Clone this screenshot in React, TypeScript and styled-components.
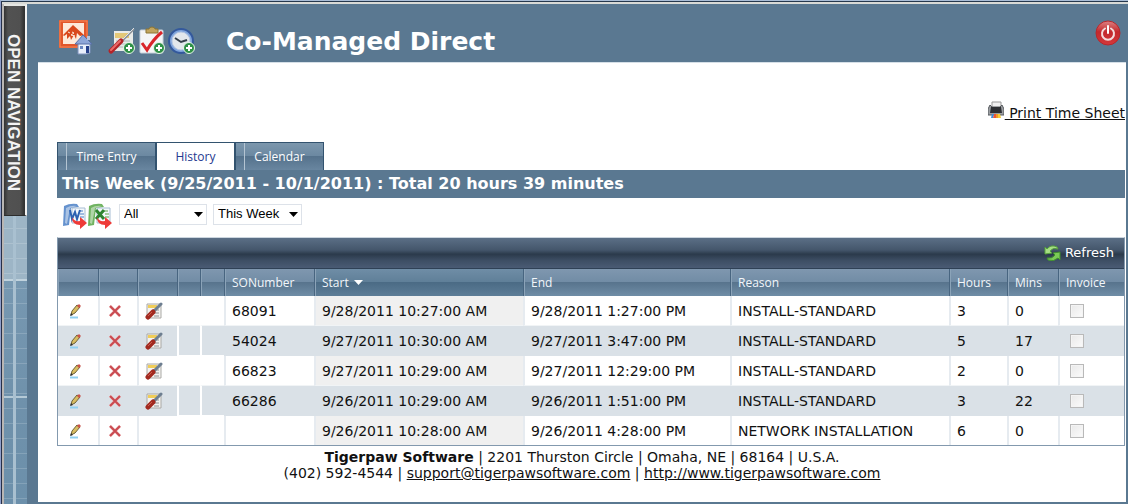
import React from "react";
import styled, { createGlobalStyle, css } from "styled-components";

const ui = `Verdana, "DejaVu Sans", sans-serif`;
const chrome = `"Segoe UI", "Open Sans", "Noto Sans", sans-serif`;

const GlobalStyle = createGlobalStyle`
  * { box-sizing: border-box; }
  body {
    margin: 0;
    background: #5a7891;
    color: #111;
    font: 14px/16px ${ui};
  }
  button { font: inherit; color: inherit; padding: 0; border: 0; background: none; cursor: pointer; }
  svg { display: block; flex: none; }
`;

const Page = styled.div`
  display: flex;
  min-height: 100vh;
  border-top: 1px solid #a9bdd6;
  border-left: 1px solid #8f9fca;
  box-shadow: inset 0 1px #26384d, inset 1px 0 #26304a, inset 0 3px #d9dad6, inset 3px 0 #b9b6b4;
  padding: 3px 0 0 3px;
`;

const Rail = styled.aside`
  display: flex;
  flex-direction: column;
  flex: none;
  width: 23px;
  background:
    linear-gradient(90deg, transparent 9px, #a9c0d0 9px, #a9c0d0 12px, transparent 12px),
    linear-gradient(transparent 275px, #c0d2dd 275px, #c0d2dd 277px, transparent 277px, transparent 392px, #b4c9d6 392px, #b4c9d6 394px, transparent 394px),
    repeating-linear-gradient(transparent 0, transparent 14px, rgba(255, 255, 255, 0.16) 14px, rgba(255, 255, 255, 0.16) 15px),
    linear-gradient(#9db5c6 275px, #7798b1 275px, #6f91ab 400px, #6c90ab);
`;

const OpenNavigation = styled.button`
  && {
    height: 212px;
    padding: 4px 3px 0 0;
    border-top: 2px solid #e4e5e2;
    border-right: 2px solid #f2f2f2;
    background: linear-gradient(90deg, #333 0, #525252 4px, #505050 16px, #333 20px);
    border-bottom: 1px solid #2c2c2c;
    color: #f4f4f4;
    font: bold 17px/18px "Liberation Sans", Arial, sans-serif;
    writing-mode: vertical-rl;
    text-align: center;
  }
`;

const Main = styled.div`
  display: flex;
  flex-direction: column;
  flex: 1;
  min-width: 0;
  padding: 0 2px 2px 11px;
`;

const Header = styled.header`
  display: flex;
  align-items: center;
  height: 58px;
  padding: 0 5px 0 20px;
`;

const Shortcuts = styled.div`
  display: flex;
  align-items: center;
  gap: 14px;
  margin: 8px 29px 0 0;
`;

const QuickActions = styled.div`
  display: flex;
  margin-top: 8px;
`;

const Title = styled.h1`
  flex: 1;
  margin: 18px 0 0;
  color: #fff;
  font: bold 25px/32px ${ui};
`;

const Panel = styled.main`
  display: flex;
  flex-direction: column;
  flex: 1;
  padding: 34px 0 20px;
  background: #fff;
  border-top: 1px solid #d5dfe7;
`;

const Content = styled.div`
  padding: 0 1px 0 19px;
`;

const PrintRow = styled.div`
  display: flex;
  justify-content: flex-end;
  height: 45px;
`;

const PrintLink = styled.a`
  display: flex;
  align-items: center;
  gap: 1px;
  height: 32px;
  color: #111;
  white-space: pre;
  svg { margin-bottom: 6px; }
`;

const Tabs = styled.nav`
  display: flex;
  height: 28px;
`;

const Tab = styled.button<{ $active?: boolean; $width: number }>`
  && {
    width: ${(p) => p.$width}px;
    border: 1px solid #33536f;
    border-bottom: 0;
    color: #fff;
    font: 12px/24px ${chrome};
    background: linear-gradient(90deg, transparent 8px, #b4c4d2 8px, #b4c4d2 9px, transparent 9px),
      linear-gradient(#7c97ad, #6b88a1 49%, #55728c 50%, #6986a0);
    ${(p) => p.$active && css`background: #fff; color: #24388f;`}
  }
`;

const Banner = styled.h2`
  margin: 0;
  padding: 0 5px;
  background: #5a7891;
  color: #fff;
  font: bold 16px/28px ${ui};
`;

const Filters = styled.div`
  display: flex;
  align-items: center;
  gap: 6px;
  height: 39px;
  padding: 0 0 7px 5px;
`;

const Exports = styled.div`
  display: flex;
  margin: 3px 1px 0 0;
`;

const SelectWrap = styled.div<{ $width: number }>`
  display: grid;
  align-items: center;
  width: ${(p) => p.$width}px;
  > * { grid-area: 1 / 1; }
  svg { justify-self: end; margin-right: 4px; pointer-events: none; }
`;

const Select = styled.select`
  appearance: none;
  width: 100%;
  height: 21px;
  padding: 0 4px;
  border: 1px solid #dde2e9;
  border-radius: 0;
  background: #fff;
  color: #000;
  font: 13px/18px "Liberation Sans", Arial, sans-serif;
`;

const Grid = styled.section`
  border: 1px solid #8399ae;
  border-top-color: #ccd6df;
`;

const Toolbar = styled.div`
  display: flex;
  justify-content: flex-end;
  align-items: center;
  height: 31px;
  padding-right: 10px;
  background: linear-gradient(#5b6f86, #44566b 40%, #2b3a4b 54%, #3d4e64 75%, #4a5b74);
  border-bottom: 1px solid #2f4156;
`;

const Refresh = styled.button`
  && {
    display: flex;
    align-items: center;
    gap: 4px;
    color: #fff;
    font: 13px/18px ${ui};
  }
`;

const Table = styled.table`
  width: 100%;
  table-layout: fixed;
  border-collapse: separate;
  border-spacing: 0;
`;

const Th = styled.th<{ $sorted?: boolean }>`
  height: 27px;
  padding: 0 7px;
  border-left: 1px solid #486580;
  box-shadow: inset 1px 0 #8ba3b8;
  background: ${(p) =>
    p.$sorted
      ? "linear-gradient(#6f8da6, #5f7f98 49%, #4b6b85 50%, #5d7d97)"
      : "linear-gradient(#7f97af, #718ca5 49%, #58748d 50%, #6f8da6)"};
  color: #f2f6fa;
  font: 12px/20px ${chrome};
  text-align: left;
  white-space: nowrap;
  &:first-child { border-left: 0; }
  svg { display: inline-block; margin-left: 5px; vertical-align: 2px; }
`;

const Td = styled.td<{ $sorted?: boolean; $icon?: boolean; $spacer?: boolean }>`
  height: 30px;
  padding: ${(p) => (p.$icon ? "0" : "0 6px")};
  border-left: 2px solid ${(p) => (p.$spacer ? "#fff" : "#e6ebf0")};
  border-bottom: 1px solid #f1f4f6;
  background: ${(p) => (p.$sorted ? "#f0f0f0" : "#fff")};
  white-space: nowrap;
  &:first-child { border-left: 0; }
  tr:nth-child(even) > & {
    background: #dae1e7;
    border-left-color: ${(p) => (p.$spacer ? "#fff" : "#dae1e7")};
    border-bottom-color: ${(p) => (p.$spacer ? "#fff" : "#dae1e7")};
  }
  tr:last-child > & { height: 29px; border-bottom: 0; }
`;

const IconButton = styled.button<{ $inset?: number }>`
  && {
    display: block;
    margin-left: ${(p) => p.$inset ?? 0}px;
  }
`;

const Check = styled.input`
  appearance: none;
  display: block;
  width: 14px;
  height: 14px;
  margin: 0 0 0 4px;
  border: 1px solid #b9b9b9;
  background: linear-gradient(135deg, #e9e9e9, #fbfbfb);
  box-shadow: inset 0 0 0 1px #f4f4f4;
`;

const Footer = styled.footer`
  padding-top: 3px;
  text-align: center;
  a { color: #111; }
`;

const HomeIcon = () => (
  <svg width="35" height="36" viewBox="0 0 35 36">
    <rect x="1" y="1" width="29" height="28" fill="#e2562a" />
    <rect x="2" y="2" width="27" height="26" fill="none" stroke="#f58a5c" />
    <rect x="5" y="4" width="21" height="21" fill="#fde9da" />
    <path d="M5 16 15 6l11 10-4 1-3-3-1 6-2-4-3 5-1-4-3 3v-5l-3 2z" fill="#d9481c" />
    <path d="m14 13 2 1-3 2 4 1M10 13l2 1" stroke="#fde9da" fill="none" />
    <path d="M20 24h12v10l-4 1H20z" fill="#e9effb" stroke="#7f92bd" />
    <path d="M17 25 25 16l9 9z" fill="#8ea6d8" stroke="#5870a8" />
    <path d="M29 17h3v4h-3z" fill="#b9c5dc" />
    <path d="M22 27h3v3h-3z" fill="#6a86c0" />
    <path d="M28 27h3v7h-3z" fill="#26418c" />
  </svg>
);

const Plus = () => (
  <g>
    <circle cx="22" cy="22" r="5.5" fill="#2f9147" stroke="#e9f6ea" />
    <path d="M22 19v6M19 22h6" stroke="#fff" strokeWidth="2" />
  </g>
);

const AddOrderIcon = () => (
  <svg width="30" height="30" viewBox="0 0 30 30">
    <path d="M7 5h19v20H7z" fill="#e9ebe8" />
    <path d="M8 7h14v5H8z" fill="#e3c878" />
    <path d="M9 15h14M9 18h12M9 21h8" stroke="#b4b8bd" />
    <path d="M27 3 15 15" stroke="#8e949a" strokeWidth="2" />
    <path d="M27 2 16 13" stroke="#dfe3e6" />
    <path d="M4 25 14 15" stroke="#b52328" strokeWidth="5" strokeLinecap="round" />
    <path d="m4 24 9-9" stroke="#ea6b69" strokeWidth="2" strokeLinecap="round" />
    <Plus />
  </svg>
);

const AddTaskIcon = () => (
  <svg width="30" height="30" viewBox="0 0 30 30">
    <rect x="3" y="4" width="23" height="23" rx="1" fill="#f4f5f7" stroke="#c9d2db" />
    <path d="M9 3h3a3 2 0 0 1 6 0h3v4H9z" fill="#c2a55e" stroke="#8b7434" />
    <path d="m5 17 5 7C14 17 19 11 25 6" fill="none" stroke="#d9252a" strokeWidth="3" />
    <Plus />
  </svg>
);

const AddTimeIcon = () => (
  <svg width="30" height="30" viewBox="0 0 30 30">
    <circle cx="14" cy="15" r="12" fill="#7fa5dd" stroke="#34599c" strokeWidth="2" />
    <circle cx="14" cy="15" r="9" fill="#e3e8ec" stroke="#b9c9e2" />
    <path d="m8 12 6 4 6-2" fill="none" stroke="#35404b" strokeWidth="2" />
    <Plus />
  </svg>
);

const PowerIcon = () => (
  <svg width="26" height="26" viewBox="0 0 26 26">
    <defs>
      <linearGradient id="power" x2="0" y2="1">
        <stop offset="0" stopColor="#dd8283" />
        <stop offset=".45" stopColor="#c3282c" />
        <stop offset="1" stopColor="#d5383b" />
      </linearGradient>
    </defs>
    <circle cx="13" cy="13" r="12" fill="url(#power)" stroke="#b7272c" />
    <path d="M10 8.5a6 6 0 1 0 6 0" fill="none" stroke="#f3dcdc" strokeWidth="2" strokeLinecap="round" />
    <path d="M13 6v7" stroke="#fff" strokeWidth="2" strokeLinecap="round" />
  </svg>
);

const PrinterIcon = () => (
  <svg width="16" height="18" viewBox="0 0 16 18">
    <path d="M4 1h9v6H4z" fill="#f0f0f0" stroke="#999" />
    <path d="M2 4 0 8v6h16V8l-2-4-2 2H4z" fill="#9b9ea2" stroke="#55585c" />
    <path d="M3 6h10l1 6H2z" fill="#2d2f33" />
    <path d="M4 13h2l-1 4H3z" fill="#3a8ddb" />
    <path d="M6 13h2v4H5z" fill="#e8553a" />
    <path d="M8 13h2v4H8z" fill="#f09a22" />
    <path d="M10 13h2l1 4h-3z" fill="#f5ce32" />
  </svg>
);

const ExportIcon = ({ kind }: { kind: "word" | "excel" }) => {
  const c = kind === "word" ? "#4a7fc6" : "#57a645";
  return (
    <svg width="25" height="26" viewBox="0 0 25 26">
      <path d="M2 3Q8 0 15 1l2 3-8 1-2 17-6 1z" fill={c} opacity=".85" />
      <path d="M4 5Q9 2 15 3L8 5 5 21 3 20z" fill="#fff" opacity=".45" />
      <path d="M10 5h13v15H10z" fill="#f4f8fc" stroke="#a8bdd3" />
      <path d="M17 8h4M18 11h4M18 14h4" stroke={c} />
      {kind === "word" ? (
        <path d="m8 7 2 9 3-7 2 7 3-9" fill="none" stroke="#2d62b3" strokeWidth="2" />
      ) : (
        <path d="m9 7 8 9M17 7l-8 9" fill="none" stroke="#2e8430" strokeWidth="3" />
      )}
      <path d="M10 14q2 5 8 4v-4l7 6-7 6v-4q-8 0-8-8z" fill="#ee3b38" />
    </svg>
  );
};

const RefreshIcon = () => (
  <svg width="17" height="17" viewBox="0 0 17 17">
    <path d="M1 2 3 4Q7-1 13 2l1 2Q9 2 6 6l2 2-7 1z" fill="#a5dd84" stroke="#56a33c" />
    <path d="m16 15-2-2q-4 4-10 2l-1-2q5 1 8-3L9 8l7-1z" fill="#7ccb57" stroke="#3f8f2c" />
  </svg>
);

const PencilIcon = () => (
  <svg width="14" height="16" viewBox="0 0 14 16">
    <path d="m3 12 1-4 5-6 3 2-5 6z" fill="#d8bd62" stroke="#6d6238" />
    <path d="m9 3 2-2 2 2-2 2z" fill="#c9534a" />
    <path d="m2 13 1-3 2 2z" fill="#333" />
    <path d="M2 14.5h8" stroke="#8fd0f2" strokeWidth="2" />
  </svg>
);

const DeleteIcon = () => (
  <svg width="14" height="14" viewBox="0 0 14 14">
    <path d="m2 2 10 10M12 2 2 12" stroke="#f0b6b6" strokeWidth="3" />
    <path d="m2 2 10 10M12 2 2 12" stroke="#c94a50" strokeWidth="2" />
  </svg>
);

const OrderIcon = () => (
  <svg width="18" height="18" viewBox="0 0 18 18">
    <path d="M2 2h14v14H2z" fill="#f3f3f0" stroke="#aaa9a6" />
    <path d="M3 3h9v3H3z" fill="#f0cd59" />
    <path d="M8 8h6M9 11h5M9 14h5" stroke="#8f9296" />
    <path d="m16 2-7 7" stroke="#6d7e90" strokeWidth="3" strokeLinecap="round" />
    <path d="m3 15 5-5" stroke="#a22a20" strokeWidth="5" strokeLinecap="round" />
    <path d="m3 14 4-4" stroke="#cd5b4c" />
  </svg>
);

const Arrow = ({ fill }: { fill: string }) => (
  <svg width="9" height="5" viewBox="0 0 9 5">
    <path d="M0 0h9L4.5 5z" fill={fill} />
  </svg>
);

const columns = [40, 39, 40, 23, 24, 90, 209, 207, undefined, 58, 51, 66];

const rows = [
  { so: "68091", start: "9/28/2011 10:27:00 AM", end: "9/28/2011 1:27:00 PM", reason: "INSTALL-STANDARD", hours: 3, mins: 0 },
  { so: "54024", start: "9/27/2011 10:30:00 AM", end: "9/27/2011 3:47:00 PM", reason: "INSTALL-STANDARD", hours: 5, mins: 17 },
  { so: "66823", start: "9/27/2011 10:29:00 AM", end: "9/27/2011 12:29:00 PM", reason: "INSTALL-STANDARD", hours: 2, mins: 0 },
  { so: "66286", start: "9/26/2011 10:29:00 AM", end: "9/26/2011 1:51:00 PM", reason: "INSTALL-STANDARD", hours: 3, mins: 22 },
  { so: "", start: "9/26/2011 10:28:00 AM", end: "9/26/2011 4:28:00 PM", reason: "NETWORK INSTALLATION", hours: 6, mins: 0 },
];

export default function App() {
  return (
    <>
      <GlobalStyle />
      <Page>
        <Rail>
          <OpenNavigation type="button">OPEN NAVIGATION</OpenNavigation>
        </Rail>
        <Main>
          <Header>
            <Shortcuts>
              <IconButton type="button" aria-label="Home"><HomeIcon /></IconButton>
              <QuickActions>
                <IconButton type="button" aria-label="Add service order"><AddOrderIcon /></IconButton>
                <IconButton type="button" aria-label="Add task"><AddTaskIcon /></IconButton>
                <IconButton type="button" aria-label="Add time"><AddTimeIcon /></IconButton>
              </QuickActions>
            </Shortcuts>
            <Title>Co-Managed Direct</Title>
            <IconButton type="button" aria-label="Log out"><PowerIcon /></IconButton>
          </Header>
          <Panel>
            <Content>
              <PrintRow>
                <PrintLink href="#print"><PrinterIcon /><span> Print Time Sheet</span></PrintLink>
              </PrintRow>
              <Tabs>
                <Tab type="button" $width={99}>Time Entry</Tab>
                <Tab type="button" $width={79} $active>History</Tab>
                <Tab type="button" $width={89}>Calendar</Tab>
              </Tabs>
              <Banner>This Week (9/25/2011 - 10/1/2011) : Total 20 hours 39 minutes</Banner>
              <Filters>
                <Exports>
                  <IconButton type="button" aria-label="Export to Word"><ExportIcon kind="word" /></IconButton>
                  <IconButton type="button" aria-label="Export to Excel"><ExportIcon kind="excel" /></IconButton>
                </Exports>
                <SelectWrap $width={88}>
                  <Select aria-label="Entries" defaultValue="All"><option>All</option></Select>
                  <Arrow fill="#000" />
                </SelectWrap>
                <SelectWrap $width={89}>
                  <Select aria-label="Period" defaultValue="This Week"><option>This Week</option></Select>
                  <Arrow fill="#000" />
                </SelectWrap>
              </Filters>
              <Grid>
                <Toolbar>
                  <Refresh type="button"><RefreshIcon />Refresh</Refresh>
                </Toolbar>
                <Table>
                  <colgroup>
                    {columns.map((w, i) => <col key={i} width={w} />)}
                  </colgroup>
                  <thead>
                    <tr>
                      <Th /><Th /><Th /><Th /><Th />
                      <Th>SONumber</Th>
                      <Th $sorted>Start<Arrow fill="#fff" /></Th>
                      <Th>End</Th>
                      <Th>Reason</Th>
                      <Th>Hours</Th>
                      <Th>Mins</Th>
                      <Th>Invoice</Th>
                    </tr>
                  </thead>
                  <tbody>
                    {rows.map((r) => (
                      <tr key={r.start}>
                        <Td $icon><IconButton type="button" $inset={10} aria-label="Edit"><PencilIcon /></IconButton></Td>
                        <Td $icon><IconButton type="button" $inset={8} aria-label="Delete"><DeleteIcon /></IconButton></Td>
                        <Td $icon>
                          {r.so && <IconButton type="button" $inset={6} aria-label="Service order"><OrderIcon /></IconButton>}
                        </Td>
                        <Td $spacer />
                        <Td $spacer />
                        <Td>{r.so}</Td>
                        <Td $sorted>{r.start}</Td>
                        <Td>{r.end}</Td>
                        <Td>{r.reason}</Td>
                        <Td>{r.hours}</Td>
                        <Td>{r.mins}</Td>
                        <Td><Check type="checkbox" disabled aria-label="Invoice" /></Td>
                      </tr>
                    ))}
                  </tbody>
                </Table>
              </Grid>
            </Content>
            <Footer>
              <div><b>Tigerpaw Software</b> | 2201 Thurston Circle | Omaha, NE | 68164 | U.S.A.</div>
              <div>
                (402) 592-4544 | <a href="mailto:support@tigerpawsoftware.com">support@tigerpawsoftware.com</a> |{" "}
                <a href="http://www.tigerpawsoftware.com">http://www.tigerpawsoftware.com</a>
              </div>
            </Footer>
          </Panel>
        </Main>
      </Page>
    </>
  );
}
